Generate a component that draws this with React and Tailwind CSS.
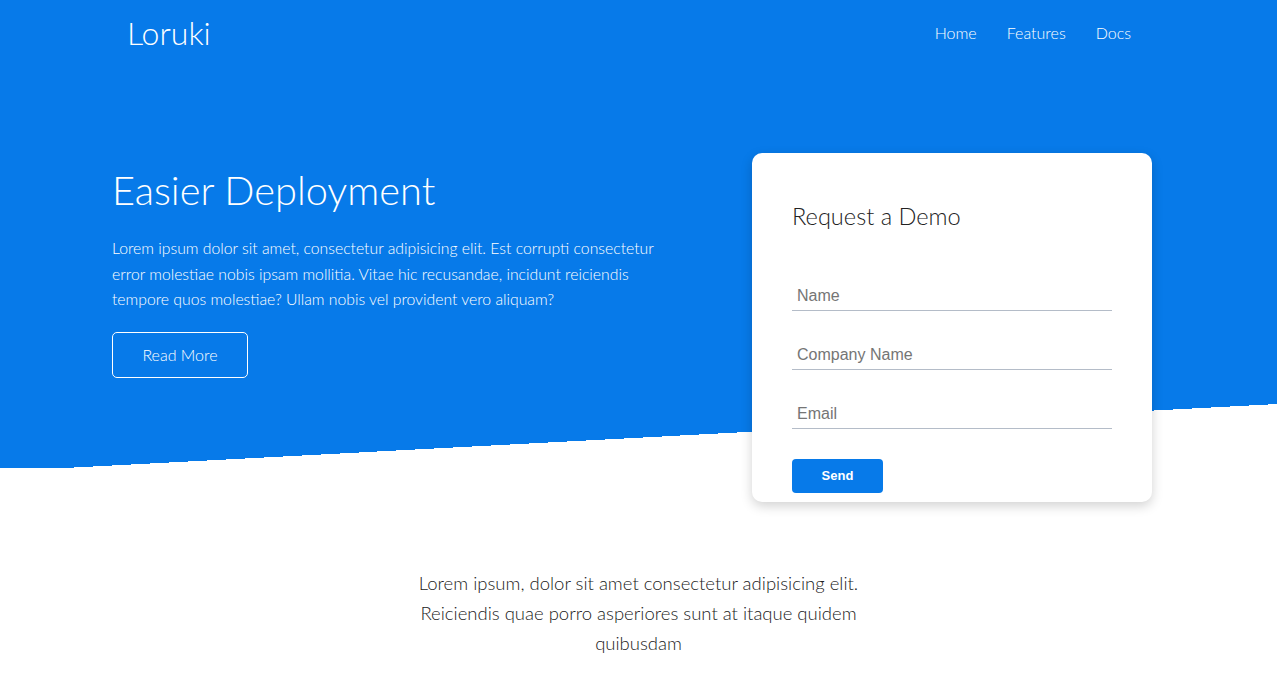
import React from 'react';

const Field = ({ placeholder, type = 'text' }) => (
  <input
    type={type}
    placeholder={placeholder}
    className="block w-full h-[30px] px-[5px] border-b border-[#b4bcc8] text-[16px] leading-[18px] text-[#333] placeholder:text-[#757575] outline-none font-['Liberation_Sans',Arial,sans-serif]"
  />
);

const App = () => {
  return (
    <div className="min-h-screen bg-white font-['Lato',sans-serif] font-light">
      {/* top area, blue background with slanted bottom edge */}
      <div
        className="h-[502px] bg-no-repeat bg-[linear-gradient(#077ae9,#077ae9),linear-gradient(to_bottom_right,#077ae9_50%,transparent_50%),linear-gradient(#077ae9,#077ae9)] [background-size:100%_404px,calc(100%_-_65px)_64px,65px_64px] [background-position:0_0,65px_404px,0_404px]"
      >
        <nav className="ml-[112px] w-[1034px] h-[66px] flex items-center justify-between">
          <a href="#" className="pl-[15px] text-[32px] font-light text-white leading-none">Loruki</a>
          <ul className="flex text-white text-[16px]">
            <li><a href="#" className="px-[15px]">Home</a></li>
            <li><a href="#" className="px-[15px]">Features</a></li>
            <li><a href="#" className="px-[15px]">Docs</a></li>
          </ul>
        </nav>

        <div className="ml-[112px] w-[1040px] mt-[87px] flex justify-between items-start">
          <div className="w-[560px] pt-[13px] text-white">
            <h1 className="text-[39.75px] leading-[48px] font-light">Easier Deployment</h1>
            <p className="mt-[21px] text-[15.75px] leading-[25.6px]">
              Lorem ipsum dolor sit amet, consectetur adipisicing elit. Est corrupti consectetur error molestiae nobis ipsam mollitia. Vitae hic recusandae, incidunt reiciendis tempore quos molestiae? Ullam nobis vel provident vero aliquam?
            </p>
            <a
              href="#"
              className="mt-[20px] flex items-center justify-center w-[136px] h-[46px] border border-white rounded-[5px] text-[16px]"
            >
              Read More
            </a>
          </div>

          <div className="w-[400px] h-[349px] bg-white rounded-[10px] shadow-[0_4px_12px_rgba(0,0,0,0.18)] px-[40px] pt-[48px]">
            <h2 className="text-[23.6px] leading-[31px] font-light text-[#222]">Request a Demo</h2>
            <form className="mt-[49px]" onSubmit={(e) => e.preventDefault()}>
              <Field placeholder="Name" />
              <div className="mt-[29px]"><Field placeholder="Company Name" /></div>
              <div className="mt-[29px]"><Field placeholder="Email" type="email" /></div>
              <button
                type="submit"
                className="mt-[30px] w-[91px] h-[34px] rounded-[4px] text-white text-[13px] font-bold font-['Liberation_Sans',Arial,sans-serif] bg-[#077ae9]"
              >
                Send
              </button>
            </form>
          </div>
        </div>
      </div>

      <section className="mt-[66px] pb-10">
        <p className="mx-auto max-w-[480px] text-center text-[18.5px] leading-[30px] text-[#222]">
          Lorem ipsum, dolor sit amet consectetur adipisicing elit. Reiciendis quae porro asperiores sunt at itaque quidem quibusdam
        </p>
      </section>
    </div>
  );
};

export default App;
